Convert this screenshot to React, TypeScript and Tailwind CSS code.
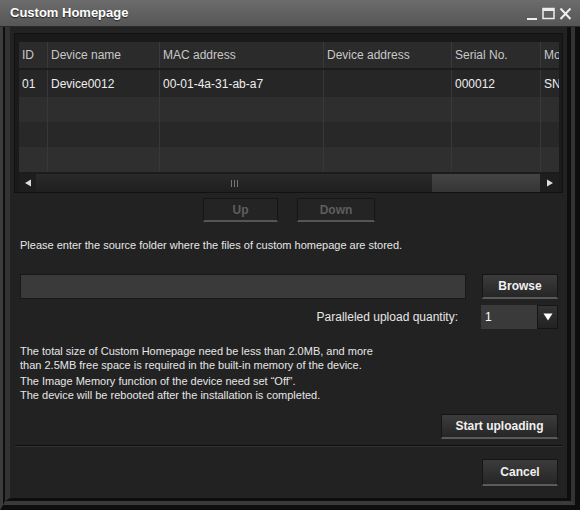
import type { ReactNode } from "react";

const cols = [
  { label: "ID", w: "w-[29px]" },
  { label: "Device name", w: "w-[112px]" },
  { label: "MAC address", w: "w-[164px]" },
  { label: "Device address", w: "w-[128px]" },
  { label: "Serial No.", w: "w-[89px]" },
  { label: "Mo", w: "w-[18px]" },
];

const rows = [
  { bg: "bg-[#262626]", h: "h-[27px]", cells: ["01", "Device0012", "00-01-4a-31-ab-a7", "", "000012", "SN"] },
  { bg: "bg-[#2e2e2e]", h: "h-[25px]", cells: ["", "", "", "", "", ""] },
  { bg: "bg-[#282828]", h: "h-[25px]", cells: ["", "", "", "", "", ""] },
  { bg: "bg-[#2f2f2f]", h: "h-[25px]", cells: ["", "", "", "", "", ""] },
];

function Button({
  children,
  className = "",
  disabled = false,
}: {
  children: ReactNode;
  className?: string;
  disabled?: boolean;
}) {
  return (
    <button
      className={`flex items-center justify-center border border-[#151515] border-b-[2px] text-[12px] font-bold ${
        disabled
          ? "bg-[#242424] text-[#5e5e5e] border-b-[#555]"
          : "bg-gradient-to-b from-[#3c3c3c] to-[#262626] text-[#f0f0f0] border-b-[#5a5a5a]"
      } ${className}`}
    >
      {children}
    </button>
  );
}

export default function App() {
  return (
    <div className="flex h-[510px] w-[580px] flex-col bg-[#3a3a3a] font-['Liberation_Sans',Arial,sans-serif]">
      {/* title bar */}
      <div className="flex h-[27px] items-center justify-between border-b border-[#2a2a2a] bg-gradient-to-b from-[#6c6c6c] to-[#565656] pl-[10px] pr-[8px]">
        <span className="text-[13px] font-bold text-white [text-shadow:0_1px_1px_#222]">
          Custom Homepage
        </span>
        <div className="flex items-center gap-[4px] pt-[2px]">
          <svg width="12" height="14" viewBox="0 0 12 14">
            <rect x="1" y="11" width="10" height="2" fill="#eee" />
          </svg>
          <svg width="13" height="14" viewBox="0 0 13 14">
            <rect x="1" y="1.5" width="11" height="10" fill="none" stroke="#eee" strokeWidth="1.5" />
            <rect x="1" y="1" width="11" height="3" fill="#eee" />
          </svg>
          <svg width="13" height="14" viewBox="0 0 13 14">
            <path d="M1.5 1.5 L11.5 12 M11.5 1.5 L1.5 12" stroke="#eee" strokeWidth="2" />
          </svg>
        </div>
      </div>

      {/* frame */}
      <div className="flex flex-1 border-l-[3px] border-r-[5px] border-b-[5px] border-l-[#3c3c3c] border-r-[#0e0e0e] border-b-[#0e0e0e]">
        <div className="flex flex-1 border-l-[2px] border-r-[4px] border-b-[4px] border-l-[#0e0e0e] border-r-[#333] border-b-[#3a3a3a]">
          <div className="flex flex-1 border-l-[5px] border-r-[4px] border-b-[3px] border-l-[#333] border-r-[#0e0e0e] border-b-[#0e0e0e]">
            <div className="flex flex-1 flex-col bg-[#222]">
              {/* table panel */}
              <div className="mx-[4px] mt-[6px] h-[160px] border border-[#111] bg-[#1a1a1a] pl-[4px] pt-[8px] pr-[3px]">
                <div className="flex w-[540px] flex-col overflow-hidden bg-[#1c1c1c]">
                  <div className="flex h-[26px] bg-[#2b2b2b] text-[12px] text-[#c8c8c8]">
                    {cols.map((c, i) => (
                      <div
                        key={c.label}
                        className={`${c.w} flex shrink-0 items-center overflow-hidden whitespace-nowrap pl-[3px] ${
                          i < cols.length - 1 ? "border-r border-[#3a3a3a]" : ""
                        }`}
                      >
                        {c.label}
                      </div>
                    ))}
                  </div>
                  <div className="h-[2px] bg-[#1c1c1c]" />
                  {rows.map((r, ri) => (
                    <div key={ri} className={`flex ${r.h} ${r.bg} text-[12px] text-[#eeeeee]`}>
                      {r.cells.map((cell, i) => (
                        <div
                          key={i}
                          className={`${cols[i].w} flex shrink-0 items-center overflow-hidden whitespace-nowrap pl-[3px] ${
                            i < cols.length - 1 ? "border-r border-[#383838]" : ""
                          }`}
                        >
                          {cell}
                        </div>
                      ))}
                    </div>
                  ))}
                  {/* horizontal scrollbar */}
                  <div className="mt-[2px] flex h-[18px] items-stretch bg-[#1e1e1e]">
                    <div className="flex w-[17px] items-center justify-center">
                      <svg width="8" height="8" viewBox="0 0 8 8">
                        <path d="M1 4 L7 0.5 L7 7.5 Z" fill="#ddd" />
                      </svg>
                    </div>
                    <div className="flex w-[396px] items-center justify-center bg-gradient-to-b from-[#2a2a2a] to-[#1f1f1f]">
                      <div className="flex gap-[2px]">
                        <div className="h-[7px] w-px bg-[#777]" />
                        <div className="h-[7px] w-px bg-[#777]" />
                        <div className="h-[7px] w-px bg-[#777]" />
                      </div>
                    </div>
                    <div className="w-[108px] bg-gradient-to-b from-[#444] to-[#353535]" />
                    <div className="flex flex-1 items-center justify-center">
                      <svg width="8" height="8" viewBox="0 0 8 8">
                        <path d="M7 4 L1 0.5 L1 7.5 Z" fill="#ddd" />
                      </svg>
                    </div>
                  </div>
                </div>
              </div>

              {/* up / down */}
              <div className="mt-[5px] flex h-[24px] pl-[193px]">
                <Button disabled className="w-[75px]">Up</Button>
                <Button disabled className="ml-[19px] w-[78px]">Down</Button>
              </div>

              <p className="mt-[16px] pl-[10px] text-[11px] leading-[14px] text-[#e6e6e6]">
                Please enter the source folder where the files of custom homepage are stored.
              </p>

              {/* folder input */}
              <div className="mt-[22px] flex h-[25px] pl-[10px] pr-[9px]">
                <div className="w-[446px] border border-[#181818] bg-[#3a3a3a]" />
                <Button className="ml-auto w-[76px]">Browse</Button>
              </div>

              {/* parallel */}
              <div className="mt-[6px] flex h-[24px] items-center pr-[9px]">
                <span className="ml-auto text-[12px] text-[#e6e6e6]">Paralleled upload quantity:</span>
                <div className="ml-[23px] flex h-full w-[56px] items-center bg-[#3a3a3a] pl-[4px] text-[12px] text-white">
                  1
                </div>
                <div className="flex h-full w-[21px] items-center justify-center border border-[#151515] bg-gradient-to-b from-[#333] to-[#222]">
                  <svg width="10" height="8" viewBox="0 0 10 8">
                    <path d="M0.5 0.5 L9.5 0.5 L5 7.5 Z" fill="#fff" />
                  </svg>
                </div>
              </div>

              {/* info */}
              <div className="mt-[15px] pl-[10px] text-[11px] leading-[14px] text-[#e6e6e6]">
                <p>The total size of Custom Homepage need be less than 2.0MB, and more</p>
                <p>than 2.5MB free space is required in the built-in memory of the device.</p>
                <p className="mt-[2px]">The Image Memory function of the device need set “Off”.</p>
                <p>The device will be rebooted after the installation is completed.</p>
              </div>

              <div className="mt-[12px] flex h-[25px] pr-[9px]">
                <Button className="ml-auto w-[117px]">Start uploading</Button>
              </div>

              <div className="mx-[5px] mt-[6px] h-[2px] border-t border-[#0f0f0f] border-b border-b-[#333]" />

              <div className="mt-[12px] flex h-[27px] pr-[9px]">
                <Button className="ml-auto w-[76px]">Cancel</Button>
              </div>
            </div>
          </div>
        </div>
      </div>
    </div>
  );
}
